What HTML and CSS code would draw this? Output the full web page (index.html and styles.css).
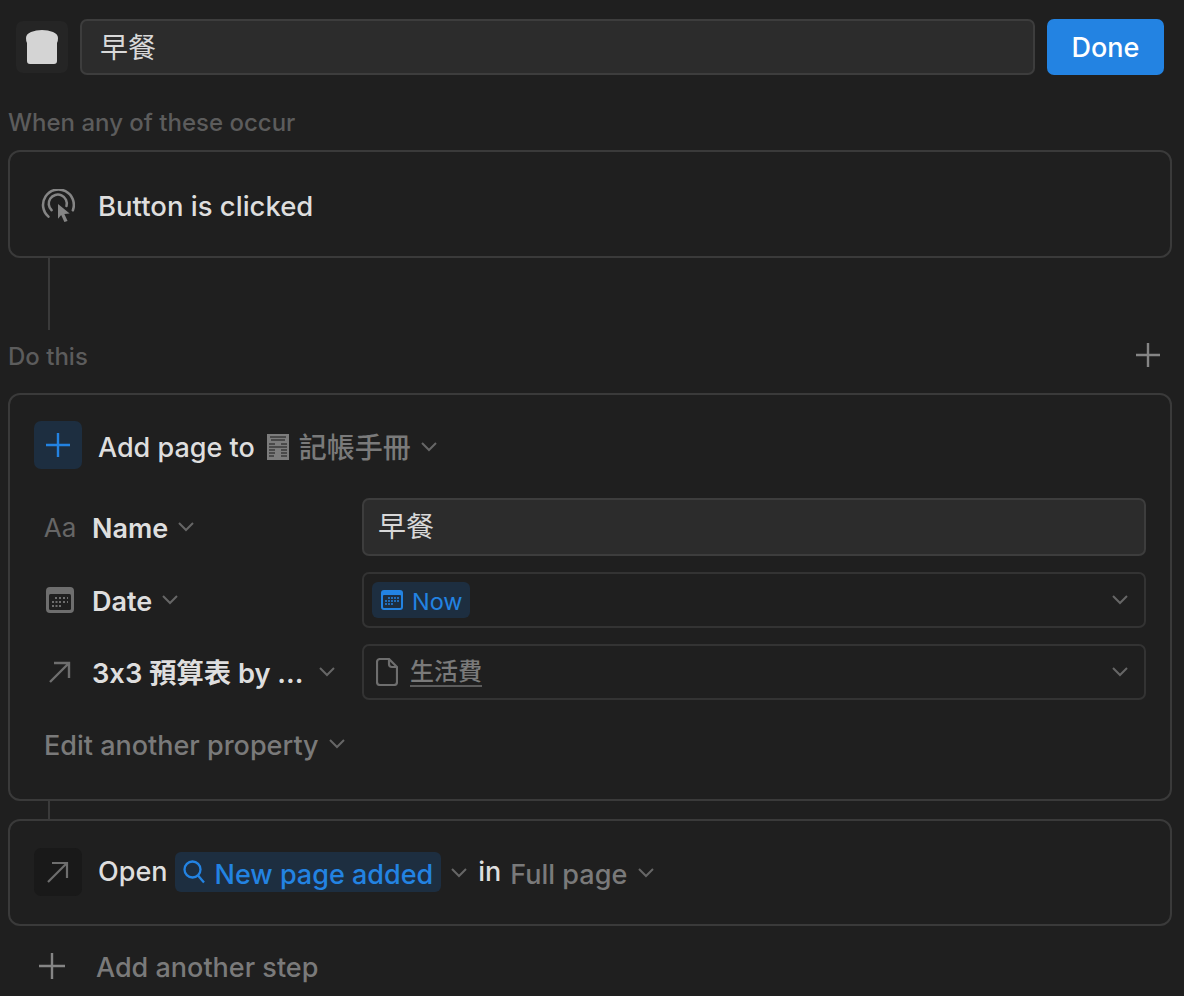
FILE: index.html
```html
<!DOCTYPE html>
<html lang="zh-Hant">
<head>
<meta charset="utf-8">
<title>早餐</title>
<link rel="stylesheet" href="styles.css">
</head>
<body>
<main class="page">
  <header class="top">
    <div class="emoji">
      <svg viewBox="0 0 32 36" width="32" height="36"><path fill="#d4d4d4" d="M4 35q-3 0-3-3V14Q0 13 0 9 0 5 5 3 10 1 16 1t11 2q5 2 5 6 0 4-1 5v18q0 3-3 3z"/></svg>
    </div>
    <div class="title-input">早餐</div>
    <button class="done">Done</button>
  </header>

  <div class="section-label first">When any of these occur</div>
  <section class="card trigger">
    <svg class="trigger-icon" viewBox="0 0 32 32" width="34" height="34" fill="none" stroke="#858585" stroke-width="2.400" stroke-linecap="round">
      <path d="M7 26A14.500 14.500 0 1 1 30 20"/>
      <path d="M10 20A8.500 8.500 0 1 1 24 16"/>
      <path fill="#858585" stroke="none" d="M16 14l11 9-5 .5 3 6.500-3 1-3-6.500-3 3.500z"/>
    </svg>
    <span class="strong down2">Button is clicked</span>
  </section>
  <div class="connector tall"></div>

  <div class="do-row">
    <div class="section-label down2">Do this</div>
    <svg class="plus" viewBox="0 0 24 24" width="24" height="24" stroke="#858585" stroke-width="2.400"><path d="M12 0v24M0 12h24"/></svg>
  </div>

  <section class="card action">
    <div class="action-head">
      <span class="tile blue">
        <svg viewBox="0 0 24 24" width="24" height="24" stroke="#2383e2" stroke-width="2.400"><path d="M12 0v24M0 12h24"/></svg>
      </span>
      <span class="strong down3">Add page to</span>
      <svg class="receipt" viewBox="0 0 22 26" width="22" height="26">
        <rect width="22" height="26" fill="#7c7c7c"/>
        <path d="M3 3h16M4 6h14M2 10h6M14 10h6M2 13h18M2 16h6M14 16h6M2 19h6M14 19h6M2 22h5M14 22h6" stroke="#3a3a3a" stroke-width="1.300"/>
      </svg>
      <span class="muted cjk down3">記帳手冊</span>
      <svg class="chev head-chev" viewBox="0 0 16 10" width="16" height="10"><path d="M1 1l7 7 7-7"/></svg>
    </div>

    <div class="prop-grid">
      <div class="prop-name">
        <span class="prop-icon aa">Aa</span>
        <span class="strong med down2">Name</span>
        <svg class="chev" viewBox="0 0 16 10" width="16" height="10"><path d="M1 1l7 7 7-7"/></svg>
      </div>
      <div class="value filled">早餐</div>

      <div class="prop-name">
        <span class="prop-icon">
          <svg viewBox="0 0 28 26" width="28" height="26"><rect width="28" height="26" rx="4" fill="#6e6e6e"/><rect x="3" y="7" width="22" height="16" rx="1.500" fill="#1f1f1f"/><path d="M9 11h2M13 11h2M17 11h2M21 11h1M6 15h2M9.500 15h2M13 15h2M17 15h2M21 15h1M6 19h2M9.500 19h2M13 19h2" stroke="#6e6e6e" stroke-width="1.800"/></svg>
        </span>
        <span class="strong med down2">Date</span>
        <svg class="chev" viewBox="0 0 16 10" width="16" height="10"><path d="M1 1l7 7 7-7"/></svg>
      </div>
      <div class="value select">
        <span class="pill now">
          <svg viewBox="0 0 22 20" width="22" height="20"><rect width="22" height="20" rx="3" fill="#2383e2"/><rect x="2" y="5" width="18" height="13" rx="1" fill="#1d2e40"/><path d="M7 8h2M10 8h2M13 8h2M16 8h2M4 11h2M7 11h2M10 11h2M13 11h2M16 11h2M4 14h2M7 14h2M10 14h2" stroke="#2383e2" stroke-width="1.400"/></svg>
          <span class="down1">Now</span>
        </span>
        <svg class="chev end" viewBox="0 0 16 10" width="16" height="10"><path d="M1 1l7 7 7-7"/></svg>
      </div>

      <div class="prop-name">
        <span class="prop-icon">
          <svg viewBox="0 0 22 22" width="22" height="22" fill="none" stroke="#6e6e6e" stroke-width="2.400"><path d="M1 21L20 2M5 2h15v15"/></svg>
        </span>
        <span class="strong med rel-name down2">3x3 預算表 by ...</span>
        <svg class="chev" viewBox="0 0 16 10" width="16" height="10"><path d="M1 1l7 7 7-7"/></svg>
      </div>
      <div class="value select">
        <svg class="doc" viewBox="0 0 22 28" width="22" height="28" fill="none" stroke="#6e6e6e" stroke-width="2.200"><path d="M4 1h9l8 8v15a3 3 0 0 1-3 3H4a3 3 0 0 1-3-3V4a3 3 0 0 1 3-3zM13 1v5a3 3 0 0 0 3 3h5"/></svg>
        <span class="page-link">生活費</span>
        <svg class="chev end" viewBox="0 0 16 10" width="16" height="10"><path d="M1 1l7 7 7-7"/></svg>
      </div>
    </div>

    <div class="edit-more">
      <span class="muted">Edit another property</span>
      <svg class="chev" viewBox="0 0 16 10" width="16" height="10"><path d="M1 1l7 7 7-7"/></svg>
    </div>
  </section>
  <div class="connector short"></div>

  <section class="card open">
    <span class="tile dark">
      <svg viewBox="0 0 22 22" width="22" height="22" fill="none" stroke="#6e6e6e" stroke-width="2.200"><path d="M1 21L20 2M5 2h15v15"/></svg>
    </span>
    <span class="strong open-word">Open</span>
    <span class="pill query">
      <svg viewBox="0 0 22 24" width="22" height="24" fill="none" stroke="#2383e2" stroke-width="2.300"><circle cx="9.500" cy="9.500" r="8"/><path d="M15 15.500l6 7"/></svg>
      <span class="down3">New page added</span>
    </span>
    <svg class="chev low-chev query-chev" viewBox="0 0 16 10" width="16" height="10"><path d="M1 1l7 7 7-7"/></svg>
    <span class="strong in">in</span>
    <span class="muted down3">Full page</span>
    <svg class="chev low-chev page-chev" viewBox="0 0 16 10" width="16" height="10"><path d="M1 1l7 7 7-7"/></svg>
  </section>

  <div class="add-step">
    <svg viewBox="0 0 28 28" width="28" height="28" stroke="#858585" stroke-width="2.400"><path d="M14 1v26M1 14h26"/></svg>
    <span class="muted down2">Add another step</span>
  </div>
</main>
</body>
</html>
```
FILE: styles.css
```css
* { box-sizing: border-box; }
html, body { margin: 0; height: 100%; }
body {
  background: #1f1f1f;
  color: #dedede;
  font-family: Inter, "Noto Sans CJK TC", sans-serif;
  font-size: 27px;
  line-height: 34px;
  font-feature-settings: "calt" 0;
  overflow: hidden;
}
svg { display: block; flex: none; }
.page { padding: 19px 12px 0 8px; }

.down1 { padding-top: 3px; }
.down2 { padding-top: 4px; }
.down3 { padding-top: 6px; }

.top { display: flex; gap: 12px; height: 56px; padding: 0 8px; }
.emoji {
  width: 52px; height: 52px; margin-top: 2px;
  background: #252525; border-radius: 7px;
  display: flex; align-items: center; justify-content: center;
}
.title-input {
  flex: 1; background: #2c2c2c; border: 2px solid #3d3d3d; border-radius: 7px;
  padding: 10px 18px 0; color: #d8d8d8; font-size: 28px;
}
.done {
  width: 117px; border: 0; border-radius: 7px; background: #2383e2; color: #fff;
  font: 500 27px Inter, sans-serif;
}

.section-label { color: #5c5c5c; font-size: 24px; font-weight: 500; line-height: 30px; }
.first { margin: 33px 0 12px; }

.card { border: 2px solid #3a3a3a; border-radius: 12px; }
.strong { color: #dedede; font-weight: 500; }
.muted { color: #7a7a7a; font-weight: 500; }

.trigger { height: 108px; display: flex; align-items: center; gap: 23px; padding-left: 31px; }
.trigger .strong { font-size: 27.500px; }
.trigger-icon { margin-top: 3px; }
.connector { width: 2px; margin-left: 40px; background: #3a3a3a; }
.tall { height: 72px; }
.short { height: 18px; }

.do-row { display: flex; justify-content: space-between; align-items: center; height: 63px; padding-right: 12px; padding-bottom: 13px; }

.action { height: 408px; padding: 26px 24px 0 24px; }
.action-head { display: flex; align-items: center; gap: 12px; height: 48px; }
.tile { width: 48px; height: 48px; border-radius: 7px; display: flex; align-items: center; justify-content: center; flex: none; }
.blue { background: #1d2e40; margin-right: 4px; }
.dark { background: #191919; }
.receipt { margin-right: -2px; margin-top: 3px; }
.cjk { font-size: 28px; }
.chev { fill: none; stroke: #666; stroke-width: 2; }
.head-chev { margin-top: 3px; margin-left: -2px; }
.low-chev { margin-top: 2px; }
.query-chev { margin-left: 2px; margin-right: 1px; }
.page-chev { margin-left: 3px; }

.prop-grid {
  display: grid; grid-template-columns: 328px 1fr; row-gap: 16px; margin-top: 29px;
}
.prop-name { display: flex; align-items: center; gap: 10px; padding-left: 10px; }
.prop-icon { width: 32px; display: flex; justify-content: center; margin-right: 6px; flex: none; color: #666; }
.aa { font-size: 26px; font-weight: 400; padding-top: 2px; }
.med { font-weight: 600; }
.rel-name { white-space: nowrap; margin-right: 6px; font-size: 27.300px; }
.value { height: 56px; border-radius: 7px; display: flex; align-items: center; }
.filled { height: 58px; background: #2c2c2c; border: 2px solid #3d3d3d; padding: 0 14px; color: #d8d8d8; font-size: 28px; }
.select { border: 2px solid #333; padding: 0 16px 0 8px; gap: 12px; }
.end { margin-left: auto; }
.pill { display: inline-flex; align-items: center; gap: 10px; border-radius: 6px; background: #1d2e40; color: #2383e2; }
.now { height: 36px; padding: 0 7px 0 9px; font-size: 23.500px; gap: 9px; }
.doc { margin-left: 4px; }
.page-link { color: #7a7a7a; font-weight: 500; font-size: 24px; border-bottom: 2px solid #5c5c5c; line-height: 27px; padding-top: 1px; }
.edit-more { display: flex; align-items: center; gap: 10px; height: 34px; margin: 29px 0 0 10px; }
.edit-more .chev { margin-top: -4px; }

.open { height: 107px; display: flex; align-items: center; gap: 8px; padding: 0 0 2px 24px; }
.open .tile { margin-right: 8px; }
.open-word { margin-right: -1px; }
.query { height: 40px; padding: 0 8px 0 8px; font-weight: 500; }
.in { margin: 0 1px 0 2px; }
.add-step { display: flex; align-items: center; gap: 30px; height: 34px; padding-left: 30px; margin-top: 23px; }
```
